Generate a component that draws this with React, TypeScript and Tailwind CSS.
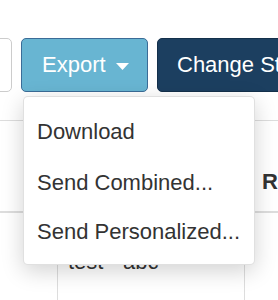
export default function App() {
  return (
    <div className="relative w-[278px] h-[300px] overflow-hidden bg-white font-['Liberation_Sans',Arial,sans-serif] text-[22px] text-[#333]">
      {/* toolbar */}
      <div className="flex items-stretch gap-[9px] pt-[38px] h-[92px] whitespace-nowrap">
        <div className="ml-[-40px] w-[52px] shrink-0 rounded-[5px] border border-[#ccc] bg-white" />
        <button className="flex shrink-0 items-center w-[127px] rounded-[5px] border border-[#3b6c97] bg-[#68b5d2] pl-[20px] text-white leading-none">
          Export
          <svg className="ml-[10px] mt-[2px]" width="13" height="7" viewBox="0 0 13 7">
            <path d="M0 0 L13 0 L6.5 7 Z" fill="white" />
          </svg>
        </button>
        <button className="flex shrink-0 items-center rounded-[5px] border border-[#14304b] bg-[#1c3f60] pl-[19px] pr-[20px] text-white leading-none">
          Change Status
        </button>
      </div>

      {/* table behind */}
      <div className="mt-[28px] border-t border-[#ddd] whitespace-nowrap">
        <div className="flex h-[92px] items-end border-b-2 border-[#ddd] pb-[14px]">
          <div className="w-[58px] shrink-0" />
          <div className="w-[187px] shrink-0" />
          <div className="shrink-0 pl-[17px] font-bold leading-[31px]">Rating</div>
        </div>
        <div className="flex h-[100px]">
          <div className="w-[58px] shrink-0 border-r border-[#ddd]" />
          <div className="w-[187px] shrink-0 border-r border-[#ddd] pl-[10px] pt-[33px] leading-[31px]">test - abc</div>
          <div />
        </div>
      </div>

      {/* dropdown menu */}
      <div className="absolute left-[23px] top-[96px] w-[232px] rounded-[5px] border border-[rgba(0,0,0,0.12)] bg-white pt-[9px] pb-[8px] shadow-[0_6px_22px_rgba(0,0,0,0.18)]">
        <div className="flex h-[51px] items-center pl-[13px]">Download</div>
        <div className="flex h-[50px] items-center pl-[13px]">Send Combined...</div>
        <div className="flex h-[49px] items-center pl-[13px]">Send Personalized...</div>
      </div>
    </div>
  );
}
